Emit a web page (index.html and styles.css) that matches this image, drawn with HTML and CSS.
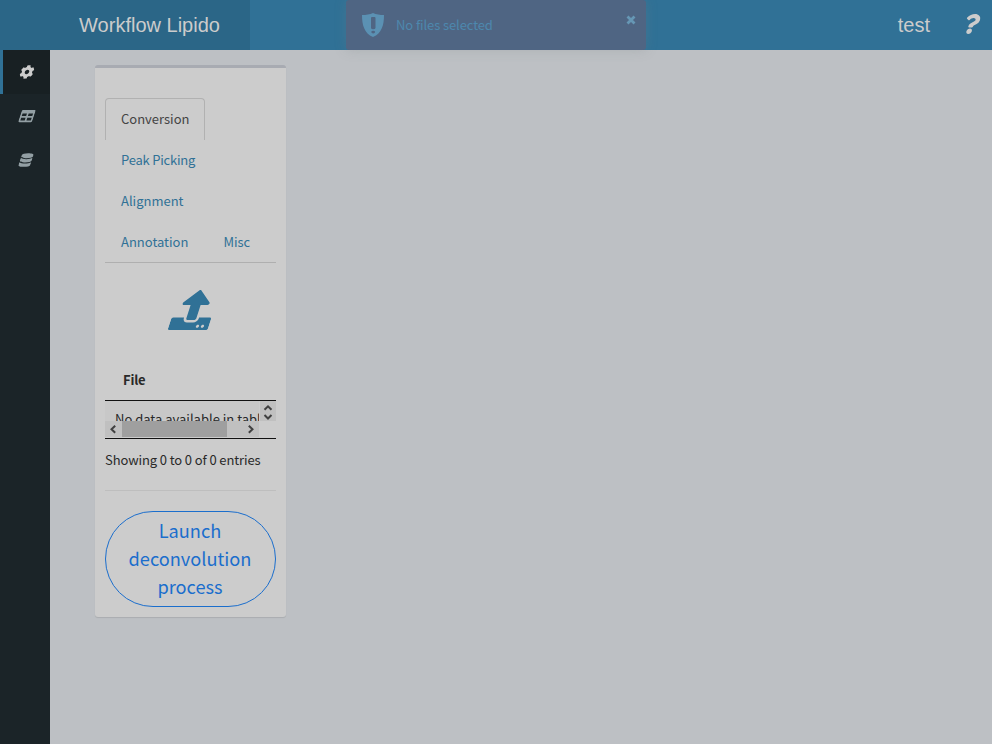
FILE: index.html
```html
<!DOCTYPE html>
<html lang="en">
<head>
<meta charset="utf-8">
<title>Workflow Lipido</title>
<link rel="stylesheet" href="styles.css">
</head>
<body>
<header class="header">
  <div class="logo">Workflow Lipido</div>
  <div class="user">test</div>
  <svg class="help" viewBox="0 0 384 512"><path d="M202.021 0C122.202 0 70.503 32.703 29.914 91.026c-7.363 10.58-5.093 25.086 5.178 32.874l43.138 32.709c10.373 7.865 25.132 6.026 33.253-4.148 25.049-31.381 43.63-49.449 82.757-49.449 30.764 0 68.816 19.799 68.816 49.631 0 22.552-18.617 34.134-48.993 51.164-35.423 19.86-82.299 44.576-82.299 106.405V320c0 13.255 10.745 24 24 24h72.471c13.255 0 24-10.745 24-24v-5.773c0-42.86 125.268-44.645 125.268-160.627C377.504 66.256 286.902 0 202.021 0zM192 373.459c-38.196 0-69.271 31.075-69.271 69.271 0 38.195 31.075 69.27 69.271 69.27s69.271-31.075 69.271-69.271-31.075-69.27-69.271-69.27z"/></svg>
</header>
<div class="main">
  <nav class="sidebar">
    <a class="side-item active"><svg class="side-icon" viewBox="0 0 512 512"><path d="M487.4 315.7l-42.6-24.6c4.3-23.2 4.3-47 0-70.2l42.6-24.6c4.9-2.8 7.1-8.6 5.5-14-11.1-35.6-30-67.8-54.7-94.6-3.8-4.1-10-5.1-14.8-2.3L380.8 110c-17.9-15.4-38.5-27.3-60.8-35.1V25.8c0-5.6-3.9-10.5-9.4-11.7-36.7-8.2-74.3-7.8-109.2 0-5.5 1.2-9.4 6.1-9.4 11.7V75c-22.2 7.9-42.8 19.8-60.8 35.1L88.7 85.5c-4.9-2.8-11-1.9-14.8 2.3-24.7 26.7-43.6 58.9-54.7 94.6-1.7 5.4.6 11.2 5.5 14L67.3 221c-4.3 23.2-4.3 47 0 70.2l-42.6 24.6c-4.9 2.8-7.1 8.6-5.5 14 11.1 35.6 30 67.8 54.7 94.6 3.8 4.1 10 5.1 14.8 2.3l42.6-24.6c17.9 15.4 38.5 27.3 60.8 35.1v49.2c0 5.6 3.9 10.5 9.4 11.7 36.7 8.2 74.3 7.8 109.2 0 5.5-1.2 9.4-6.1 9.4-11.7v-49.2c22.2-7.9 42.8-19.8 60.8-35.1l42.6 24.6c4.9 2.8 11 1.9 14.8-2.3 24.7-26.7 43.6-58.9 54.7-94.6 1.5-5.5-.7-11.3-5.6-14.1zM256 336c-44.1 0-80-35.9-80-80s35.9-80 80-80 80 35.9 80 80-35.9 80-80 80z"/></svg></a>
    <a class="side-item"><svg class="side-icon" viewBox="0 0 512 512"><path d="M464 32H48C21.49 32 0 53.49 0 80v352c0 26.51 21.49 48 48 48h416c26.51 0 48-21.49 48-48V80c0-26.51-21.49-48-48-48zM224 416H64v-96h160v96zm0-160H64v-96h160v96zm224 160H288v-96h160v96zm0-160H288v-96h160v96z"/></svg></a>
    <a class="side-item"><svg class="side-icon db" viewBox="0 0 448 512"><path d="M448 73.143v45.714C448 159.143 347.667 192 224 192S0 159.143 0 118.857V73.143C0 32.857 100.333 0 224 0s224 32.857 224 73.143zM448 176v102.857C448 319.143 347.667 352 224 352S0 319.143 0 278.857V176c48.125 33.143 136.208 48.572 224 48.572S399.874 209.143 448 176zm0 160v102.857C448 479.143 347.667 512 224 512S0 479.143 0 438.857V336c48.125 33.143 136.208 48.572 224 48.572S399.874 369.143 448 336z"/></svg></a>
  </nav>
  <main class="content">
    <section class="box">
      <ul class="tabs">
        <li class="tab selected">Conversion</li>
        <li class="tab peak">Peak Picking</li>
        <li class="tab">Alignment</li>
        <li class="tab">Annotation</li>
        <li class="tab">Misc</li>
      </ul>
      <div class="upload">
        <svg class="upload-icon" viewBox="0 0 512 512"><path d="M296 384h-80c-13.3 0-24-10.7-24-24V192h-87.7c-17.8 0-26.7-21.5-14.1-34.1L242.3 5.7c7.5-7.5 19.8-7.5 27.3 0l152.2 152.2c12.6 12.6 3.7 34.1-14.1 34.1H320v168c0 13.3-10.7 24-24 24zm216-8v112c0 13.3-10.7 24-24 24H24c-13.3 0-24-10.7-24-24V376c0-13.3 10.7-24 24-24h136v8c0 30.9 25.1 56 56 56h80c30.9 0 56-25.1 56-56v-8h136c13.3 0 24 10.7 24 24zm-124 88c0-11-9-20-20-20s-20 9-20 20 9 20 20 20 20-9 20-20zm64 0c0-11-9-20-20-20s-20 9-20 20 9 20 20 20 20-9 20-20z"/></svg>
      </div>
      <div class="table-head">File</div>
      <div class="table-body">
        <div class="cell">No data available in table</div>
        <div class="vbar">
          <svg class="arrows" viewBox="0 0 16 20"><path d="M4.500 8.800 8 5.300l3.500 3.500M4.500 14 8 17.500l3.500-3.500"/></svg>
        </div>
        <div class="hbar">
          <svg class="arrow" viewBox="0 0 17 16"><path d="M10.200 4.700 6.500 8.200l3.700 3.500"/></svg>
          <div class="track"><div class="thumb"></div></div>
          <svg class="arrow" viewBox="0 0 17 16"><path d="M6.800 4.700 10.500 8.200l-3.700 3.500"/></svg>
        </div>
      </div>
      <div class="info">Showing 0 to 0 of 0 entries</div>
      <hr class="rule">
      <button class="launch">Launch<br>deconvolution<br>process</button>
    </section>
  </main>
</div>
<div class="toast">
  <svg class="shield" viewBox="0 0 22 24"><path fill-rule="evenodd" d="M11 0C8 1.6 4 2 0 2c0 10 2.200 18.300 11 22C19.800 20.300 22 12 22 2 18 2 14 1.600 11 0zM10 4h2.500q1 0 1 1v10q-.3 1.300-2.300 1.300T9 15V5q0-1 1-1zM11.200 17.800a1.900 1.300 0 1 1 0 2.600 1.900 1.300 0 1 1 0-2.600z"/></svg>
  <span class="toast-text">No files selected</span>
  <svg class="close" viewBox="0 0 10 10"><path d="M1.500 1.500l7 7M8.500 1.500l-7 7"/></svg>
</div>
</body>
</html>
```
FILE: styles.css
```css
* { box-sizing: border-box; }
body {
  margin: 0;
  height: 744px;
  overflow: hidden;
  display: flex;
  flex-direction: column;
  background: #bdc0c4;
  color: #292929;
  font: 13px/20px "Noto Sans CJK SC", sans-serif;
}
svg { display: block; fill: currentColor; }
.header {
  height: 50px;
  flex: none;
  display: flex;
  align-items: center;
  background: #307196;
  color: #ccc;
  font: 20px/50px "Liberation Sans", sans-serif;
}
.logo { width: 250px; padding-left: 49px; text-align: center; background: #2b6687; }
.user { margin-left: auto; }
.help { width: 15px; height: 20px; margin: 0 13px 2px 34px; transform: skewX(-18deg); }
.main { flex: 1; display: flex; }
.sidebar { width: 50px; background: #1b2428; color: #939fa4; }
.side-item { display: flex; height: 44px; align-items: center; padding-left: 20px; }
.side-icon { width: 14px; height: 14px; transform: skewX(-18deg); }
.side-icon.db { width: 12px; }
.active { border-left: 3px solid #307196; padding-left: 17px; background: #182023; color: #ccc; }
.content { padding: 15px 45px; }
.box {
  width: 191px;
  height: 552px;
  padding: 30px 10px 0;
  border-top: 3px solid #a8abb2;
  border-radius: 3px;
  background: #ccc;
  box-shadow: 0 1px 1px rgba(0, 0, 0, .1);
}
.tabs {
  display: flex;
  flex-wrap: wrap;
  margin: 0;
  padding: 0;
  list-style: none;
  border-bottom: 1px solid #afafaf;
}
.tab { height: 41px; margin-right: 3px; padding: 9px 15px; border: 1px solid transparent; line-height: 21px; color: #307196; }
.peak { letter-spacing: -.22px; }
.selected { height: 42px; margin-bottom: -1px; border-color: #b1b1b1; border-bottom: 0; border-radius: 4px 4px 0 0; color: #444; }
.upload { display: flex; justify-content: center; padding: 27px 0 0 6px; height: 106px; color: #307196; }
.upload-icon { width: 40px; height: 40px; transform: skewX(-18deg); }
.table-head { height: 31px; padding: 0 18px; font-weight: 700; line-height: 21px; letter-spacing: -.2px; }
.table-body {
  display: grid;
  grid-template: 20px 17px / 154px 16px;
  column-gap: 1px;
  height: 39px;
  border: solid #111;
  border-width: 1px 0;
}
.cell { overflow: hidden; padding: 8px 0 0 10px; white-space: nowrap; background: #c8c8c8; }
.vbar, .hbar { background: #c0c0c0; color: #404040; }
.vbar svg, .hbar svg { fill: none; stroke: currentColor; stroke-width: 2; }
.arrows { width: 16px; height: 20px; }
.hbar { display: flex; height: 16px; }
.arrow { width: 17px; height: 16px; }
.track { flex: 1; }
.thumb { width: 105px; height: 16px; background: #9f9f9f; }
.info { margin-top: 11px; line-height: 20px; white-space: nowrap; letter-spacing: -.11px; }
.rule { margin: 20px 0; border: 0; border-top: 1px solid #bebebe; }
.launch {
  display: block;
  width: 171px;
  height: 96px;
  padding: 0 1px 2px 0;
  border: 1px solid #1b6ecc;
  border-radius: 48px;
  background: none;
  color: #1b6ecc;
  font: 18.2px/28px "Noto Sans CJK SC", sans-serif;
}
.toast {
  position: absolute;
  top: 0;
  left: 346px;
  width: 300px;
  height: 50px;
  display: flex;
  align-items: center;
  padding: 0 10px 0 16px;
  border-radius: 3px;
  background: #4f6583;
  color: #4d88ae;
  box-shadow: 0 0 12px rgba(120, 130, 130, .25);
}
.shield { width: 22px; height: 24px; color: #5b91b3; }
.toast-text { margin-left: 12px; letter-spacing: -.1px; }
.close { width: 10px; height: 10px; margin: 0 0 10px auto; stroke: #6697b5; stroke-width: 2.8; }
```
